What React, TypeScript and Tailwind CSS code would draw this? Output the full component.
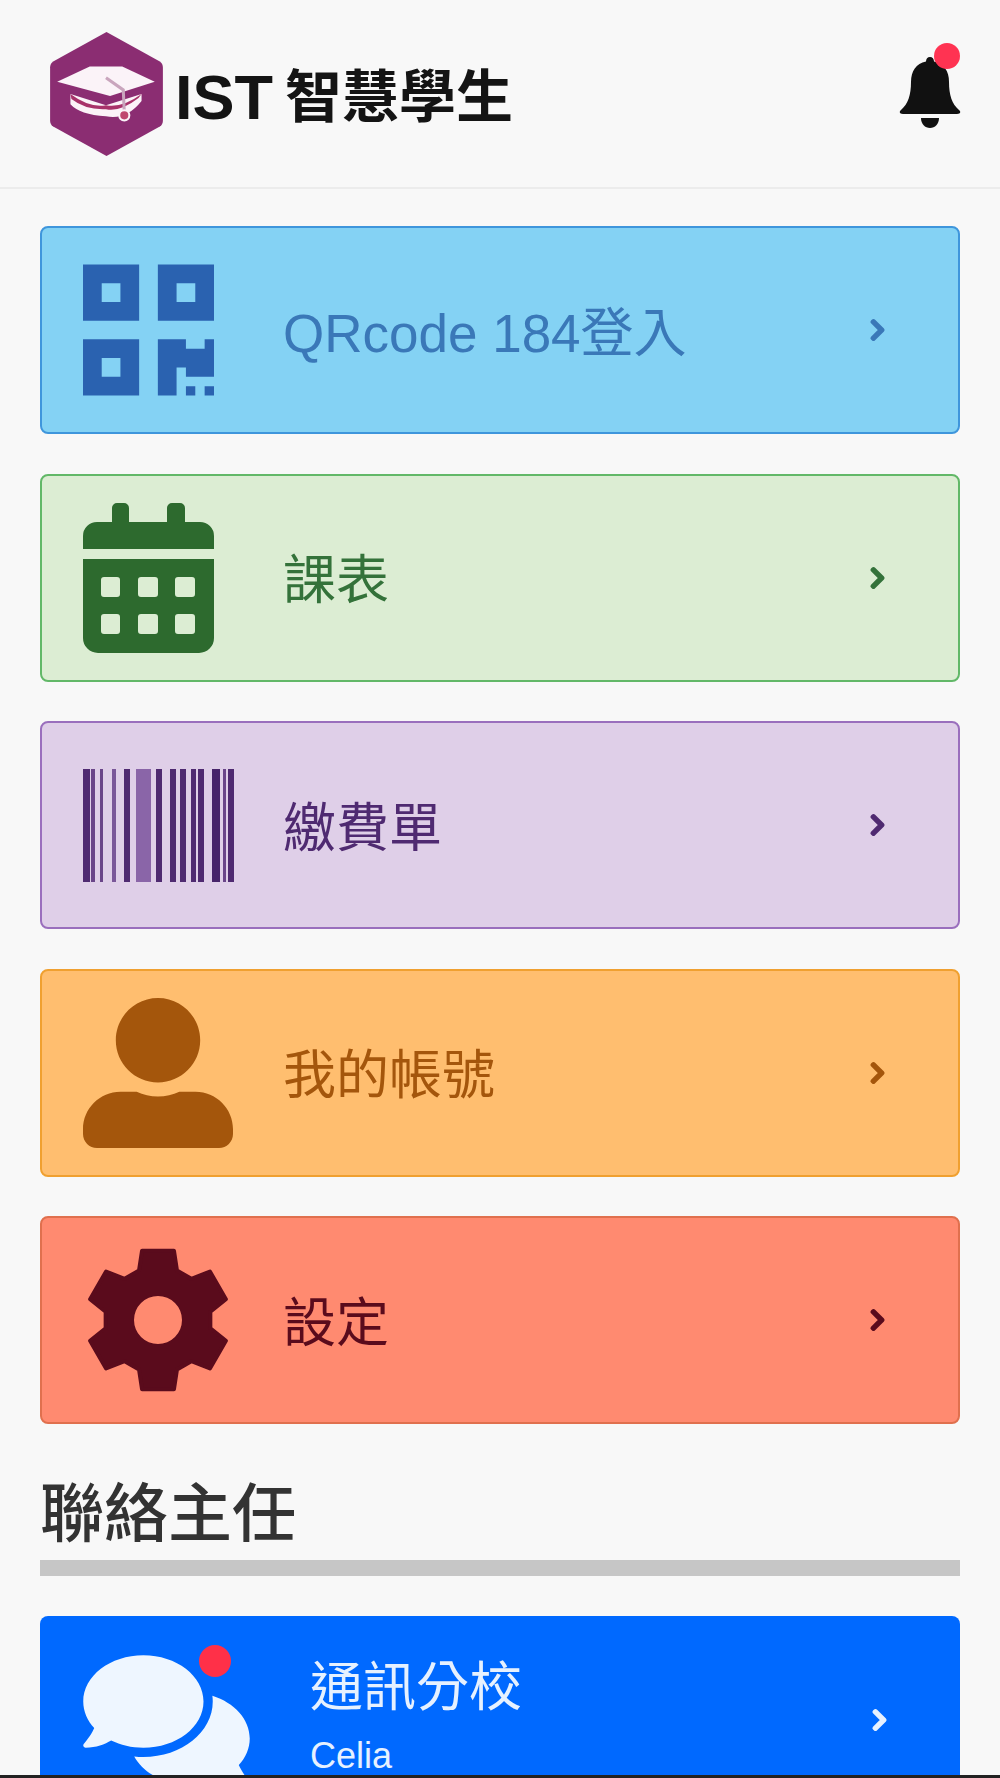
import type { ReactNode } from "react";
import { FaChevronRight, FaComments, FaQrcode } from "react-icons/fa";

type MenuCardProps = {
  label: string;
  icon: ReactNode;
  cardClassName: string;
  textClassName: string;
};

type IconProps = { className: string };

// [x, width, shade] in px, read off the reference
const BARCODE_BARS: [number, number, string][] = [
  [0, 7, "#4f2a71"],
  [8, 4, "#6a4589"],
  [17, 3, "#6a4589"],
  [29, 4, "#7a5799"],
  [41, 6, "#4f2a71"],
  [53, 15, "#8a65a8"],
  [73, 6, "#4f2a71"],
  [87, 6, "#4f2a71"],
  [97, 6, "#4f2a71"],
  [108, 5, "#4f2a71"],
  [115, 6, "#4f2a71"],
  [129, 8, "#47246a"],
  [140, 3, "#6a4589"],
  [145, 6, "#4f2a71"],
];

const GEAR_TEETH = [0, 60, 120, 180, 240, 300];

const polar = (deg: number, r: number) => {
  const rad = (deg * Math.PI) / 180;
  return `${(r * Math.sin(rad)).toFixed(2)} ${(-r * Math.cos(rad)).toFixed(2)}`;
};

const gearOutline =
  "M" +
  GEAR_TEETH.flatMap((a) => [
    polar(a - 21, 53),
    polar(a - 13, 71),
    polar(a + 13, 71),
    polar(a + 21, 53),
  ]).join(" L") +
  " Z";

const GearIcon = ({ className }: IconProps) => (
  <svg viewBox="-75 -75 150 150" className={className}>
    <path
      d={`${gearOutline} M24 0 A24 24 0 1 0 -24 0 A24 24 0 1 0 24 0 Z`}
      fill="currentColor"
      fillRule="evenodd"
    />
    <path
      d={gearOutline}
      fill="none"
      stroke="currentColor"
      strokeWidth="4"
      strokeLinejoin="round"
    />
  </svg>
);

const UserIcon = ({ className }: IconProps) => (
  <svg viewBox="0 0 512 512" className={className} fill="currentColor">
    <path d="M256 288c79.5 0 144-64.5 144-144S335.5 0 256 0 112 64.5 112 144s64.5 144 144 144zm128 32h-55.1c-22.2 10.2-46.9 16-72.9 16s-50.6-5.8-72.9-16H128C57.3 320 0 377.3 0 448v16c0 26.5 21.5 48 48 48h416c26.5 0 48-21.5 48-48v-16c0-70.7-57.3-128-128-128z" />
  </svg>
);

const CalendarIcon = ({ className }: IconProps) => (
  <svg viewBox="0 0 131 150" className={className} fill="currentColor">
    <path d="M29 5a5 5 0 0 1 5-5h7a5 5 0 0 1 5 5v14h38V5a5 5 0 0 1 5-5h8a5 5 0 0 1 5 5v14h15a14 14 0 0 1 14 14v13H0V33a14 14 0 0 1 14-14h15Z" />
    <path
      fillRule="evenodd"
      d="M0 56h131v79a15 15 0 0 1-15 15H15a15 15 0 0 1-15-15Z M21 74a3 3 0 0 0-3 3v14a3 3 0 0 0 3 3h13a3 3 0 0 0 3-3V77a3 3 0 0 0-3-3Z M58 74a3 3 0 0 0-3 3v14a3 3 0 0 0 3 3h14a3 3 0 0 0 3-3V77a3 3 0 0 0-3-3Z M95 74a3 3 0 0 0-3 3v14a3 3 0 0 0 3 3h14a3 3 0 0 0 3-3V77a3 3 0 0 0-3-3Z M21 111a3 3 0 0 0-3 3v14a3 3 0 0 0 3 3h13a3 3 0 0 0 3-3v-14a3 3 0 0 0-3-3Z M58 111a3 3 0 0 0-3 3v14a3 3 0 0 0 3 3h14a3 3 0 0 0 3-3v-14a3 3 0 0 0-3-3Z M95 111a3 3 0 0 0-3 3v14a3 3 0 0 0 3 3h14a3 3 0 0 0 3-3v-14a3 3 0 0 0-3-3Z"
    />
  </svg>
);

const BarcodeIcon = ({ className }: IconProps) => (
  <svg viewBox="0 0 151 113" className={className}>
    {BARCODE_BARS.map(([x, width, fill]) => (
      <rect key={x} x={x} y="0" width={width} height="113" fill={fill} />
    ))}
  </svg>
);

const BellIcon = ({ className }: IconProps) => (
  <svg viewBox="0 0 62 71" className={className} fill="currentColor">
    <path d="M31 0C33.5 0 35 2 35 4.5C45 6.5 50 14 50 25C50 38 53 47 60 53C62.5 55 61 57 58 57L4 57C1 57 -0.5 55 2 53C9 47 12 38 12 25C12 14 17 6.5 27 4.5C27 2 28.5 0 31 0Z" />
    <path d="M22 61L40 61C40 67 36 71 31 71C26 71 22 67 22 61Z" />
  </svg>
);

const Logo = () => (
  <svg viewBox="0 0 113 124" className="h-[126px] w-[115px] shrink-0">
    <path
      d="M56.5 1 L109 30 Q112 32 112 36 L112 88 Q112 92 109 94 L56.5 123 L4 94 Q1 92 1 88 L1 36 Q1 32 4 30 Z"
      fill="#8b2d72"
    />
    <path d="M40 35 L72 35 L104 50 L60 64 L8 50 Z" fill="#fbf3f8" />
    <path
      d="M21 62 L56 73 L91 62 L91 69 Q76 88 56 84 Q30 82 21 72 Z"
      fill="#fbf3f8"
    />
    <path d="M21 62 Q40 76 56 73 Q72 76 91 62 L88 66 Q70 80 56 77 Q36 78 22 67 Z" fill="#a8326a" />
    <path d="M56 46 L73 58 L74 80" stroke="#c9a5bd" strokeWidth="3" fill="none" />
    <circle cx="74" cy="83" r="5" fill="#c0476f" stroke="#fbf3f8" strokeWidth="2" />
  </svg>
);

const MenuCard = ({ label, icon, cardClassName, textClassName }: MenuCardProps) => (
  <div
    className={`flex h-[208px] items-center rounded-lg border-2 pl-[41px] pr-[72px] ${cardClassName}`}
  >
    <div className="flex w-[200px] shrink-0 items-center">{icon}</div>
    <span className={`flex-1 pt-[6px] text-[53px] leading-none ${textClassName}`}>{label}</span>
    <FaChevronRight className={`h-[24px] w-[17px] stroke-current stroke-[36px] ${textClassName}`} />
  </div>
);

export default function App() {
  return (
    <div className="relative flex h-[1778px] flex-col overflow-hidden bg-[#f8f8f8] font-['Liberation_Sans','Noto_Sans_CJK_TC',sans-serif]">
      <header className="flex h-[189px] shrink-0 items-center justify-between border-b-2 border-[#ececec] pl-[49px] pr-[39px]">
        <div className="flex items-center">
          <Logo />
          <span className="ml-[11px] mt-[8px] text-[63px] font-bold leading-none text-[#141414]">IST</span>
          <span className="ml-[12px] mt-[8px] text-[57px] font-bold leading-none text-[#141414]">智慧學生</span>
        </div>
        <div className="relative mt-[-2px]">
          <BellIcon className="h-[71px] w-[62px] text-[#111111]" />
          <span className="absolute right-[1px] top-[-14px] h-[26px] w-[26px] rounded-full bg-[#ff3352]" />
        </div>
      </header>

      <main className="flex min-h-0 flex-1 flex-col overflow-hidden px-10 pt-[37px]">
        <div className="flex flex-col gap-[39.5px]">
          <MenuCard
            label="QRcode 184登入"
            icon={<FaQrcode className="h-[150px] w-[131px] text-[#2a62b0]" />}
            cardClassName="border-[#3f96dc] bg-[#84d2f4]"
            textClassName="text-[#3a78b8]"
          />
          <MenuCard
            label="課表"
            icon={<CalendarIcon className="h-[150px] w-[131px] text-[#2d6a2e]" />}
            cardClassName="border-[#62b868] bg-[#dcedd3]"
            textClassName="text-[#34723a]"
          />
          <MenuCard
            label="繳費單"
            icon={<BarcodeIcon className="h-[113px] w-[151px]" />}
            cardClassName="border-[#9a6fbd] bg-[#dfcfe8]"
            textClassName="text-[#4f2a71]"
          />
          <MenuCard
            label="我的帳號"
            icon={<UserIcon className="h-[150px] w-[150px] text-[#a4560c]" />}
            cardClassName="border-[#f0a030] bg-[#ffbe6f]"
            textClassName="text-[#a4560c]"
          />
          <MenuCard
            label="設定"
            icon={<GearIcon className="h-[150px] w-[150px] text-[#5a0b1c]" />}
            cardClassName="border-[#e0704e] bg-[#ff8a70]"
            textClassName="text-[#5a0b1c]"
          />
        </div>

        <h2 className="mt-[50px] text-[64px] font-medium leading-[80px] text-[#333333]">聯絡主任</h2>
        <div className="mt-[6px] h-4 shrink-0 bg-[#c6c6c6]" />

        <div className="mt-10 flex h-[208px] shrink-0 items-center rounded-lg bg-[#0069ff] pl-[43px] pr-[72px] text-[#e6f1ff]">
          <div className="relative flex w-[227px] shrink-0 items-center">
            <FaComments className="h-[148px] w-[167px] text-[#eef6ff]" />
            <span className="absolute left-[116px] top-[-1px] h-8 w-8 rounded-full bg-[#ff3048]" />
          </div>
          <div className="mt-[-8px] flex-1">
            <div className="text-[53px] leading-[60px]">通訊分校</div>
            <div className="mt-[20px] text-[36px] leading-none">Celia</div>
          </div>
          <FaChevronRight className="h-[24px] w-[17px] stroke-current stroke-[36px]" />
        </div>
      </main>

      <div className="h-[3px] shrink-0 bg-[#222222]" />
    </div>
  );
}
